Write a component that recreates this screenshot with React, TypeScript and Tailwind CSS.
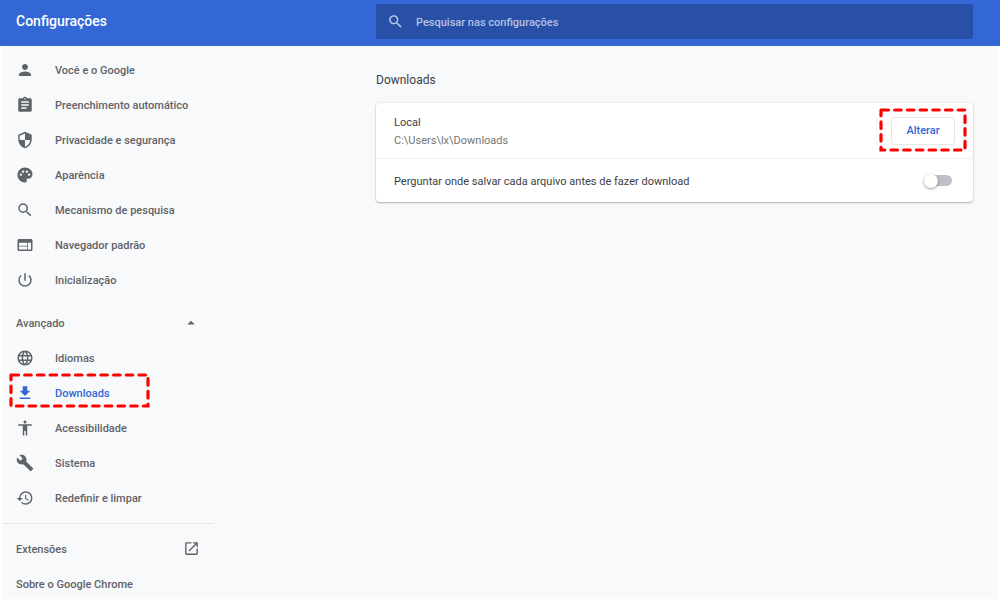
import { useState } from 'react';
import {
    MdAccessibility, MdArrowDropUp, MdAssignment, MdBuild, MdGetApp, MdLanguage, MdOpenInNew,
    MdPalette, MdPerson, MdPowerSettingsNew, MdRestore, MdSearch, MdSecurity, MdWeb
} from 'react-icons/md';

const basicItems = [
    { label: 'Você e o Google', icon: MdPerson },
    { label: 'Preenchimento automático', icon: MdAssignment },
    { label: 'Privacidade e segurança', icon: MdSecurity },
    { label: 'Aparência', icon: MdPalette },
    { label: 'Mecanismo de pesquisa', icon: MdSearch },
    { label: 'Navegador padrão', icon: MdWeb },
    { label: 'Inicialização', icon: MdPowerSettingsNew }
];

const advancedItems = [
    { label: 'Idiomas', icon: MdLanguage },
    { label: 'Downloads', icon: MdGetApp, active: true },
    { label: 'Acessibilidade', icon: MdAccessibility },
    { label: 'Sistema', icon: MdBuild },
    { label: 'Redefinir e limpar', icon: MdRestore }
];

// Dashed red marker around a control
function Marker({ width, height, className }: { width: number; height: number; className: string }) {
    return (
        <svg className={`absolute pointer-events-none ${className}`} width={width} height={height} fill="none" aria-hidden="true">
            <path
                d={`M3 2H${width - 2}V${height - 2}H2V2`}
                stroke="#fe0000"
                strokeWidth="3.2"
                strokeLinecap="round"
                strokeDasharray="6.5 6.2"
            />
        </svg>
    );
}

function MenuItem({ item }: { item: { label: string; icon: any; active?: boolean } }) {
    const Icon = item.icon;
    return (
        <li className="relative">
            <a
                href="#"
                className={`flex h-[35px] items-center gap-[21px] pl-[14px] ${item.active ? 'text-[#3367d6]' : 'text-[#5f6368]'}`}
            >
                <Icon className="size-[18px]" />
                <span className="pt-[3px]">{item.label}</span>
            </a>
            {item.active && <Marker width={141} height={35} className="left-[7px] -top-[2px]" />}
        </li>
    );
}

export default function App() {
    const [ask, setAsk] = useState(false);

    return (
        <div className="flex h-screen flex-col overflow-hidden bg-[#f8f9fb] font-[Roboto,sans-serif] text-[11px] text-[#3c4043]">
            <header className="flex h-[46px] shrink-0 items-center bg-[#3367d6] pr-[27px]">
                <h1 className="w-[376px] shrink-0 pb-1 pl-4 text-sm font-medium text-white">Configurações</h1>
                <label className="mb-[3px] flex h-[35px] flex-1 items-center gap-3 rounded-xs bg-[#2850a7] pl-[11px] text-[#c2cee8]">
                    <MdSearch className="size-[17px]" />
                    <input
                        type="search"
                        aria-label="Pesquisar nas configurações"
                        placeholder="Pesquisar nas configurações"
                        className="flex-1 pt-[3px] font-medium outline-none placeholder:text-[#b3c1e2]"
                    />
                </label>
            </header>

            <div className="flex min-h-0 flex-1 border-x-2 border-b border-white">
                <nav className="w-[212px] shrink-0 overflow-hidden pt-[6px] font-medium text-[#5f6368]">
                    <ul>
                        {basicItems.map((item) => <MenuItem key={item.label} item={item} />)}
                    </ul>
                    <button className="mt-2 flex h-[35px] w-full items-center justify-between px-[14px]">
                        <span className="pt-[3px]">Avançado</span>
                        <MdArrowDropUp className="size-[18px]" />
                    </button>
                    <ul>
                        {advancedItems.map((item) => <MenuItem key={item.label} item={item} />)}
                    </ul>
                    <hr className="mb-[7px] mt-2 border-[#e6e7ea]" />
                    <a href="#" className="flex h-[35px] items-center justify-between px-[14px]">
                        <span className="pt-[3px]">Extensões</span>
                        <MdOpenInNew className="size-[17px]" />
                    </a>
                    <a href="#" className="flex h-[35px] items-center px-[14px]">
                        <span className="pt-[3px]">Sobre o Google Chrome</span>
                    </a>
                </nav>

                <main className="flex-1 pl-[162px] pr-[25px] pt-6">
                    <h2 className="mb-[13px] text-xs leading-5">Downloads</h2>
                    <section className="rounded-sm bg-white shadow-[0_1px_2px_rgba(60,64,67,0.35),0_0_2px_rgba(60,64,67,0.15)]">
                        <div className="flex h-14 items-center border-b border-[#f0f0f1] px-[18px]">
                            <div className="flex-1 pt-[2px] leading-[18px]">
                                <p>Local</p>
                                <p className="text-[#757575]">C:\Users\lx\Downloads</p>
                            </div>
                            <div className="relative border-l border-[#f0f0f1] pl-[14px]">
                                <button className="h-7 w-16 rounded-sm border border-[#e3e5e8] pt-[2px] font-medium text-[#3367d6]">Alterar</button>
                                <Marker width={88} height={44} className="-top-[9px] left-[2px]" />
                            </div>
                        </div>
                        <label className="flex h-[43px] items-center justify-between pl-[18px] pr-[21px]">
                            <span className="pt-[3px]">Perguntar onde salvar cada arquivo antes de fazer download</span>
                            <span className="relative flex h-4 w-7 items-center">
                                <input
                                    type="checkbox"
                                    role="switch"
                                    checked={ask}
                                    onChange={(e) => setAsk(e.target.checked)}
                                    className="peer ml-1 h-[11px] w-6 appearance-none rounded-full bg-[#bdc1c6] checked:bg-[#9db7ee]"
                                />
                                <span className="pointer-events-none absolute left-0 size-[14px] rounded-full bg-white shadow-[0_1px_3px_rgba(0,0,0,0.4)] peer-checked:left-[14px] peer-checked:bg-[#3367d6]" />
                            </span>
                        </label>
                    </section>
                </main>
            </div>
        </div>
    );
}
